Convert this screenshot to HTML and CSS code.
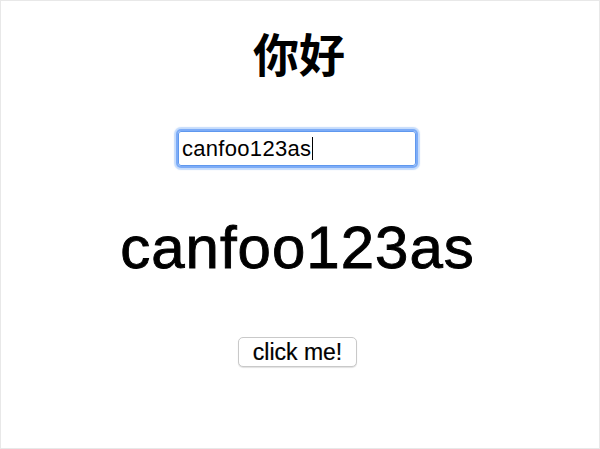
FILE: index.html
```html
<!DOCTYPE html>
<html lang="zh">
<head>
<meta charset="utf-8">
<title>你好</title>
<link rel="stylesheet" href="styles.css">
</head>
<body>
<main class="frame">
  <h1 class="title">你好</h1>
  <div class="field" role="textbox" aria-label="text"><span class="field-text">canfoo123as</span><span class="caret"></span></div>
  <p class="echo">canfoo123as</p>
  <button class="btn" type="button">click me!</button>
</main>
</body>
</html>
```

FILE: styles.css
```css
html, body {
  margin: 0;
  padding: 0;
  background: #ffffff;
}
.frame {
  box-sizing: border-box;
  width: 600px;
  height: 449px;
  border: 1px solid #e8e8e8;
  padding-top: 28px;
  display: flex;
  flex-direction: column;
  align-items: center;
  font-family: "Liberation Sans", Arial, sans-serif;
  color: #000;
}
.title {
  margin: 0 0 0 -2px;
  font-family: "Noto Sans CJK SC", "Noto Sans", sans-serif;
  font-weight: 700;
  font-size: 46px;
  line-height: 46px;
}
.field {
  box-sizing: border-box;
  margin-top: 56px;
  margin-right: 6px;
  width: 238px;
  height: 35px;
  border: 1px solid #5f98ee;
  border-radius: 3px;
  box-shadow: 0 0 0 2px rgba(100, 156, 245, 0.75), 0 0 1px 4px rgba(140, 185, 250, 0.5);
  display: flex;
  align-items: center;
  padding-left: 3px;
  font-size: 22px;
  letter-spacing: 0.3px;
}
.caret {
  display: inline-block;
  width: 1px;
  height: 23px;
  background: #000;
  margin-left: 1px;
}
.echo {
  margin: 52px 5px 0 0;
  font-size: 60px;
  line-height: 60px;
  letter-spacing: 1px;
  -webkit-text-stroke: 0.9px #000;
}
.btn {
  margin-top: 59px;
  margin-right: 5px;
  box-sizing: border-box;
  width: 119px;
  height: 30px;
  padding: 0;
  background: #ffffff;
  border: 1px solid #c9c9c9;
  border-radius: 5px;
  box-shadow: 0 1px 1px rgba(0, 0, 0, 0.12);
  font-family: "Liberation Sans", Arial, sans-serif;
  font-size: 23px;
  -webkit-text-stroke: 0.2px #000;
  color: #000;
}
```
